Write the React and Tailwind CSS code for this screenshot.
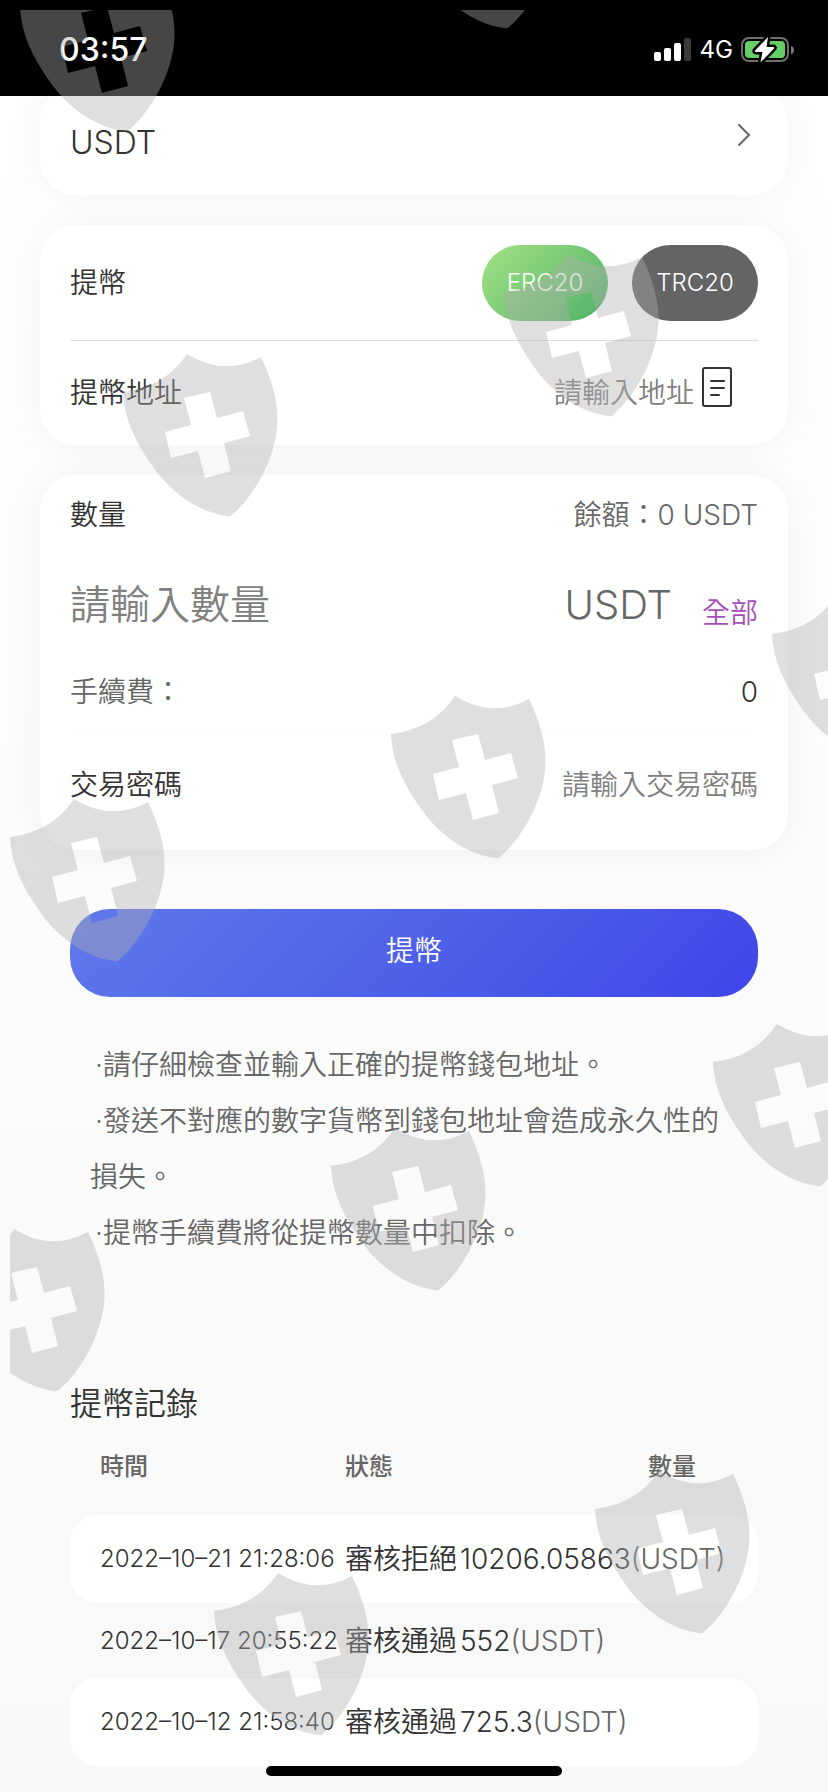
import { useState } from 'react';

const notes = [
  '請仔細檢查並輸入正確的提幣錢包地址。',
  '發送不對應的數字貨幣到錢包地址會造成永久性的損失。',
  '提幣手續費將從提幣數量中扣除。',
];

const records = [
  { time: '2022–10–21 21:28:06', status: '審核拒絕', amount: '10206.05863' },
  { time: '2022–10–17 20:55:22', status: '審核通過', amount: '552' },
  { time: '2022–10–12 21:58:40', status: '審核通過', amount: '725.3' },
];

// Watermark shields, offsets inside the overlay
const shields = [
  [10, -41], [390, -144], [113, 344], [494, 244],
  [381, 686], [762, 586], [0, 789], [703, 1014],
  [321, 1118], [-60, 1219], [585, 1461], [204, 1563],
];

function Watermark() {
  return (
    <div className="absolute top-[10px] left-[10px] right-0 bottom-0 z-30 overflow-hidden pointer-events-none" aria-hidden="true">
      <svg className="w-full h-full" fill="#afafaf" fillOpacity="0.4">
        <defs>
          <path
            id="shield"
            fillRule="evenodd"
            d="M0 38Q42 33 64 0Q101 23 138 3C150 28 155 48 154.500 68C153 105 130 143 110 160Q108 163 104 162C74 158 46 137 28 110C12 87 1 64 0 38Z
               M61 44L87 38L94 64L120 57L127 82L101 89L108 117L82 124L75 97L48 104L42 78L68 71Z"
          />
        </defs>
        {shields.map(([x, y]) => (
          <use key={`${x}-${y}`} href="#shield" x={x} y={y} />
        ))}
      </svg>
    </div>
  );
}

function StatusBar() {
  return (
    <header className="sticky top-0 z-20 h-24 bg-black text-white flex items-center justify-between pl-[59px] pr-[33px] pt-1">
      <span className="text-[32px] leading-9 font-medium">03:57</span>
      <div className="flex items-center">
        <svg width="38" height="24" viewBox="0 0 38 24" fill="#fff">
          <rect x="0" y="14" width="7" height="9" rx="2" />
          <rect x="10" y="10" width="7" height="13" rx="2" />
          <rect x="20" y="5" width="7" height="18" rx="2" />
          <rect x="30" y="0" width="7" height="23" rx="2" fill="#3a3a3a" />
        </svg>
        <span className="text-2xl font-normal ml-2">4G</span>
        <svg className="ml-2" width="54" height="28" viewBox="0 0 54 28">
          <rect x="1" y="2" width="46" height="23" rx="7" fill="none" stroke="#6f6f6f" strokeWidth="2" />
          <rect x="4" y="5" width="40" height="17" rx="4" fill="#65ce67" />
          <path d="M50 10C54 11 54 17 50 18Z" fill="#7c7c7c" />
          <path
            d="M27 1L14 14.5Q13.500 16 15 16H21.500L19.500 26.500L33 12.500Q34 11 32 11H25.500Z"
            fill="#fff"
            stroke="#000"
            strokeWidth="5"
            strokeLinejoin="round"
            paintOrder="stroke"
          />
        </svg>
      </div>
    </header>
  );
}

function Card({ className, children }) {
  return (
    <section className={`bg-white rounded-[36px] px-[30px] shadow-[0_0_40px_rgba(0,0,0,0.05)] ${className}`}>
      {children}
    </section>
  );
}

export default function App() {
  const [network, setNetwork] = useState('ERC20');

  return (
    <div className="relative min-h-screen bg-linear-to-b from-white to-[#f8f8f8] text-[#333] text-[28px] leading-10 font-[350] font-[Inter,'Noto_Sans_CJK_TC',sans-serif]">
      <StatusBar />

      <main className="px-10 -mt-[10px] pb-[26px]">
        <Card className="h-[109px]">
          <button className="w-full h-full pt-1 flex items-center justify-between text-left">
            <span className="text-[32px] font-light">USDT</span>
            <svg className="mb-4" width="24" height="24" viewBox="0 0 24 24" fill="none" stroke="#666" strokeWidth="2" strokeLinecap="round">
              <path d="M5 2L15 12L5 22" />
            </svg>
          </button>
        </Card>

        <Card className="mt-[30px]">
          <div className="h-[116px] flex items-center justify-between border-b border-[#dcdcdc]">
            <span>提幣</span>
            <div className="flex gap-6">
              <button
                onClick={() => setNetwork('ERC20')}
                aria-pressed={network === 'ERC20'}
                className="w-[126px] h-[76px] rounded-full text-2xl font-light text-white bg-linear-135 from-[#a3e285] to-[#4db168]"
              >
                ERC20
              </button>
              <button
                onClick={() => setNetwork('TRC20')}
                aria-pressed={network === 'TRC20'}
                className="w-[126px] h-[76px] rounded-full text-2xl font-light text-white bg-[#646464]"
              >
                TRC20
              </button>
            </div>
          </div>
          <div className="h-[104px] flex items-center">
            <label htmlFor="address">提幣地址</label>
            <input
              id="address"
              placeholder="請輸入地址"
              className="flex-1 min-w-0 text-right outline-none placeholder:text-[#808080]"
            />
            <button className="ml-2 mr-[26px] pb-3" aria-label="地址簿">
              <svg width="30" height="40" viewBox="0 0 30 40" fill="none" stroke="#333" strokeWidth="2" strokeLinecap="round">
                <rect x="1" y="1" width="28" height="38" rx="2" />
                <path d="M9 14H22M9 21H22M9 28H17" />
              </svg>
            </button>
          </div>
        </Card>

        <Card className="mt-[30px] pb-[10px]">
          <div className="h-20 flex items-center justify-between">
            <label htmlFor="amount">數量</label>
            <span className="text-[#666]">餘額：<span className="font-light">0 USDT</span></span>
          </div>
          <div className="h-[100px] flex items-center">
            <input
              id="amount"
              placeholder="請輸入數量"
              className="flex-1 min-w-0 text-[40px] leading-[60px] outline-none placeholder:text-[#808080]"
            />
            <span className="text-[40px] font-light text-[#666]">USDT</span>
            <button className="ml-[30px] pt-4 text-[#a64db8]">全部</button>
          </div>
          <div className="h-[75px] flex items-center justify-between border-b border-[#fdfdfd]">
            <span className="text-[#666]">手續費：</span>
            <span>0</span>
          </div>
          <div className="h-[110px] flex items-center">
            <label htmlFor="password">交易密碼</label>
            <input
              id="password"
              type="password"
              placeholder="請輸入交易密碼"
              className="flex-1 min-w-0 text-right outline-none placeholder:text-[#808080]"
            />
          </div>
        </Card>

        <div className="px-[30px]">
          <button className="mt-[59px] w-full h-[88px] pb-1 rounded-[40px] text-white bg-linear-135 from-[#6079e9] to-[#4044e8]">
            提幣
          </button>

          <div className="mt-10 px-5 leading-[56px] text-[#666]">
            {notes.map((note) => (
              <p key={note}>{`\u2009·${note}`}</p>
            ))}
          </div>

          <h2 className="mt-[120px] text-[32px] leading-[46px]">提幣記錄</h2>

          <table className="w-full table-fixed text-left whitespace-nowrap">
            <thead>
              <tr className="h-[88px] text-2xl text-[#666]">
                <th className="w-[275px] pl-[30px] pb-2 font-medium">時間</th>
                <th className="w-[115px] pb-2 font-medium">狀態</th>
                <th className="pr-[62px] pb-2 text-right font-medium">數量</th>
              </tr>
            </thead>
            <tbody>
              {records.map((r) => (
                <tr key={r.time} className="group h-[88px] even:h-[75px]">
                  <td className="pl-[30px] text-2xl font-light rounded-l-[28px] group-odd:bg-white">{r.time}</td>
                  <td className="group-odd:bg-white">{r.status}</td>
                  <td className="rounded-r-[28px] group-odd:bg-white">
                    {r.amount}
                    <span className="font-light text-[#666]">(USDT)</span>
                  </td>
                </tr>
              ))}
            </tbody>
          </table>
        </div>
      </main>

      <Watermark />
      <div className="fixed bottom-4 left-1/2 z-40 w-[296px] h-[10px] -translate-x-1/2 rounded-full bg-black" />
    </div>
  );
}
